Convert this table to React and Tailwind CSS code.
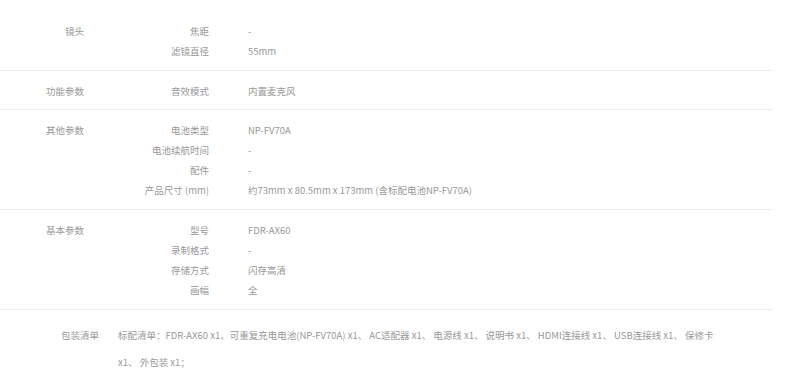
import React from "react";

const sections = [
  { title: "镜头", pt: "pt-[21px]", pb: "pb-[9px]", rows: [["焦距", "-"], ["滤镜直径", "55mm"]] },
  { title: "功能参数", pt: "pt-[10px]", pb: "pb-[8px]", rows: [["音效模式", "内置麦克风"]] },
  {
    title: "其他参数",
    pt: "pt-[10px]",
    pb: "pb-[9px]",
    rows: [
      ["电池类型", "NP-FV70A"],
      ["电池续航时间", "-"],
      ["配件", "-"],
      ["产品尺寸 (mm)", "约73mm x 80.5mm x 173mm (含标配电池NP-FV70A)"],
    ],
  },
  {
    title: "基本参数",
    pt: "pt-[10px]",
    pb: "pb-[9px]",
    rows: [
      ["型号", "FDR-AX60"],
      ["录制格式", "-"],
      ["存储方式", "闪存高清"],
      ["画幅", "全"],
    ],
  },
];

export default function App() {
  return (
    <div
      className="w-[790px] h-[374px] bg-white text-[#999999] text-[9.5px] overflow-hidden"
      style={{ fontFamily: '"Noto Sans CJK SC",sans-serif' }}
    >
      <div className="w-[773px]">
        {sections.map((s, i) => (
          <div key={i} className={`flex border-b border-[#ececec] ${s.pt} ${s.pb}`}>
            <div className="w-[84px] text-right leading-[20px] shrink-0">{s.title}</div>
            <div className="flex flex-col">
              {s.rows.map((r, j) => (
                <div key={j} className="flex leading-[20px]">
                  <div className="w-[125px] text-right shrink-0">{r[0]}</div>
                  <div className="pl-[39px] whitespace-nowrap">{r[1]}</div>
                </div>
              ))}
            </div>
          </div>
        ))}
        <div className="flex pt-[12px]">
          <div className="w-[99px] shrink-0 text-right leading-[27px]">包装清单</div>
          <div className="w-[621px] pl-[19px] leading-[27px]">
            标配清单：FDR-AX60 x1、可重复充电电池(NP-FV70A) x1、 AC适配器 x1、 电源线 x1、 说明书 x1、 HDMI连接线 x1、 USB连接线 x1、 保修卡 x1、 外包装 x1；
          </div>
        </div>
      </div>
    </div>
  );
}
